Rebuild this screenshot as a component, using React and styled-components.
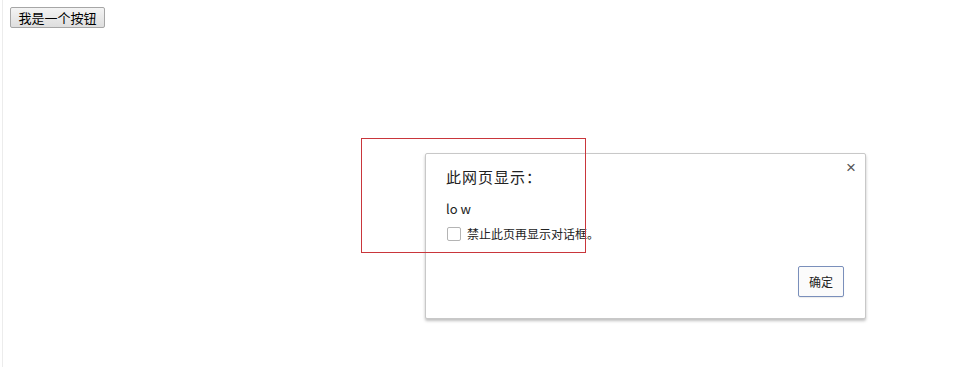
import React from 'react';
import styled, { createGlobalStyle } from 'styled-components';

const GlobalStyle = createGlobalStyle`
  html, body {
    margin: 0;
    padding: 0;
    background: #fff;
    font-family: "Noto Sans CJK SC", "Liberation Sans", sans-serif;
  }
`;

function App() {
  return (
    <Page>
      <GlobalStyle />
      <EdgeLine />
      <PageButton>我是一个按钮</PageButton>
      <Dialog>
        <Close>×</Close>
        <Title>此网页显示：</Title>
        <Message>lo w</Message>
        <CheckRow>
          <Box />
          <span>禁止此页再显示对话框。</span>
        </CheckRow>
        <Footer>
          <OkButton>确定</OkButton>
        </Footer>
      </Dialog>
      <Marker />
    </Page>
  );
}

const Page = styled.div`
  position: relative;
  width: 953px;
  height: 367px;
  overflow: hidden;
  background: #fff;
  padding: 7px 0 0 10px;
  box-sizing: border-box;
`;

const EdgeLine = styled.div`
  position: absolute;
  left: 2px;
  top: 0;
  bottom: 0;
  width: 1px;
  background: #ececec;
`;

const PageButton = styled.button`
  display: block;
  width: 95px;
  height: 21px;
  padding: 0;
  font-family: "Noto Sans CJK SC", sans-serif;
  font-size: 13px;
  color: #000;
  background: linear-gradient(#f4f4f4, #dedede);
  border: 1px solid #a6a6a6;
  border-radius: 2px;
  line-height: 18px;
`;

const Dialog = styled.div`
  position: absolute;
  left: 425px;
  top: 153px;
  width: 441px;
  height: 166px;
  box-sizing: border-box;
  background: #fff;
  border: 1px solid #c8c8c8;
  border-radius: 2px;
  box-shadow: 0 2px 3px rgba(0, 0, 0, 0.25);
  padding: 12px 20px 0 20px;
  display: flex;
  flex-direction: column;
  color: #222;
`;

const Close = styled.div`
  position: absolute;
  right: 9px;
  top: 4px;
  font-size: 17px;
  color: #555;
  line-height: 20px;
  font-family: "Liberation Sans", sans-serif;
`;

const Title = styled.div`
  font-size: 15px;
  letter-spacing: 1px;
  line-height: 22px;
  color: #222;
`;

const Message = styled.div`
  margin-top: 12px;
  font-size: 13px;
  line-height: 18px;
`;

const CheckRow = styled.div`
  margin-top: 7px;
  display: flex;
  align-items: center;
  gap: 6px;
  font-size: 12px;
  line-height: 18px;
  padding-left: 1px;
`;

const Box = styled.span`
  width: 12px;
  height: 12px;
  border: 1px solid #b4b4b4;
  border-radius: 2px;
  background: #fff;
`;

const Footer = styled.div`
  display: flex;
  justify-content: flex-end;
  margin-top: 23px;
  padding-right: 1px;
`;

const OkButton = styled.button`
  width: 46px;
  height: 31px;
  font-family: "Noto Sans CJK SC", sans-serif;
  font-size: 12px;
  color: #222;
  background: #fbfbfb;
  border: 1px solid #7a8fbb;
  border-radius: 2px;
  box-shadow: 0 1px 1px rgba(0, 0, 0, 0.08);
  padding: 0;
`;

const Marker = styled.div`
  position: absolute;
  left: 361px;
  top: 138px;
  width: 225px;
  height: 115px;
  border: 1px solid #c9363b;
  box-sizing: border-box;
`;

export default App;
